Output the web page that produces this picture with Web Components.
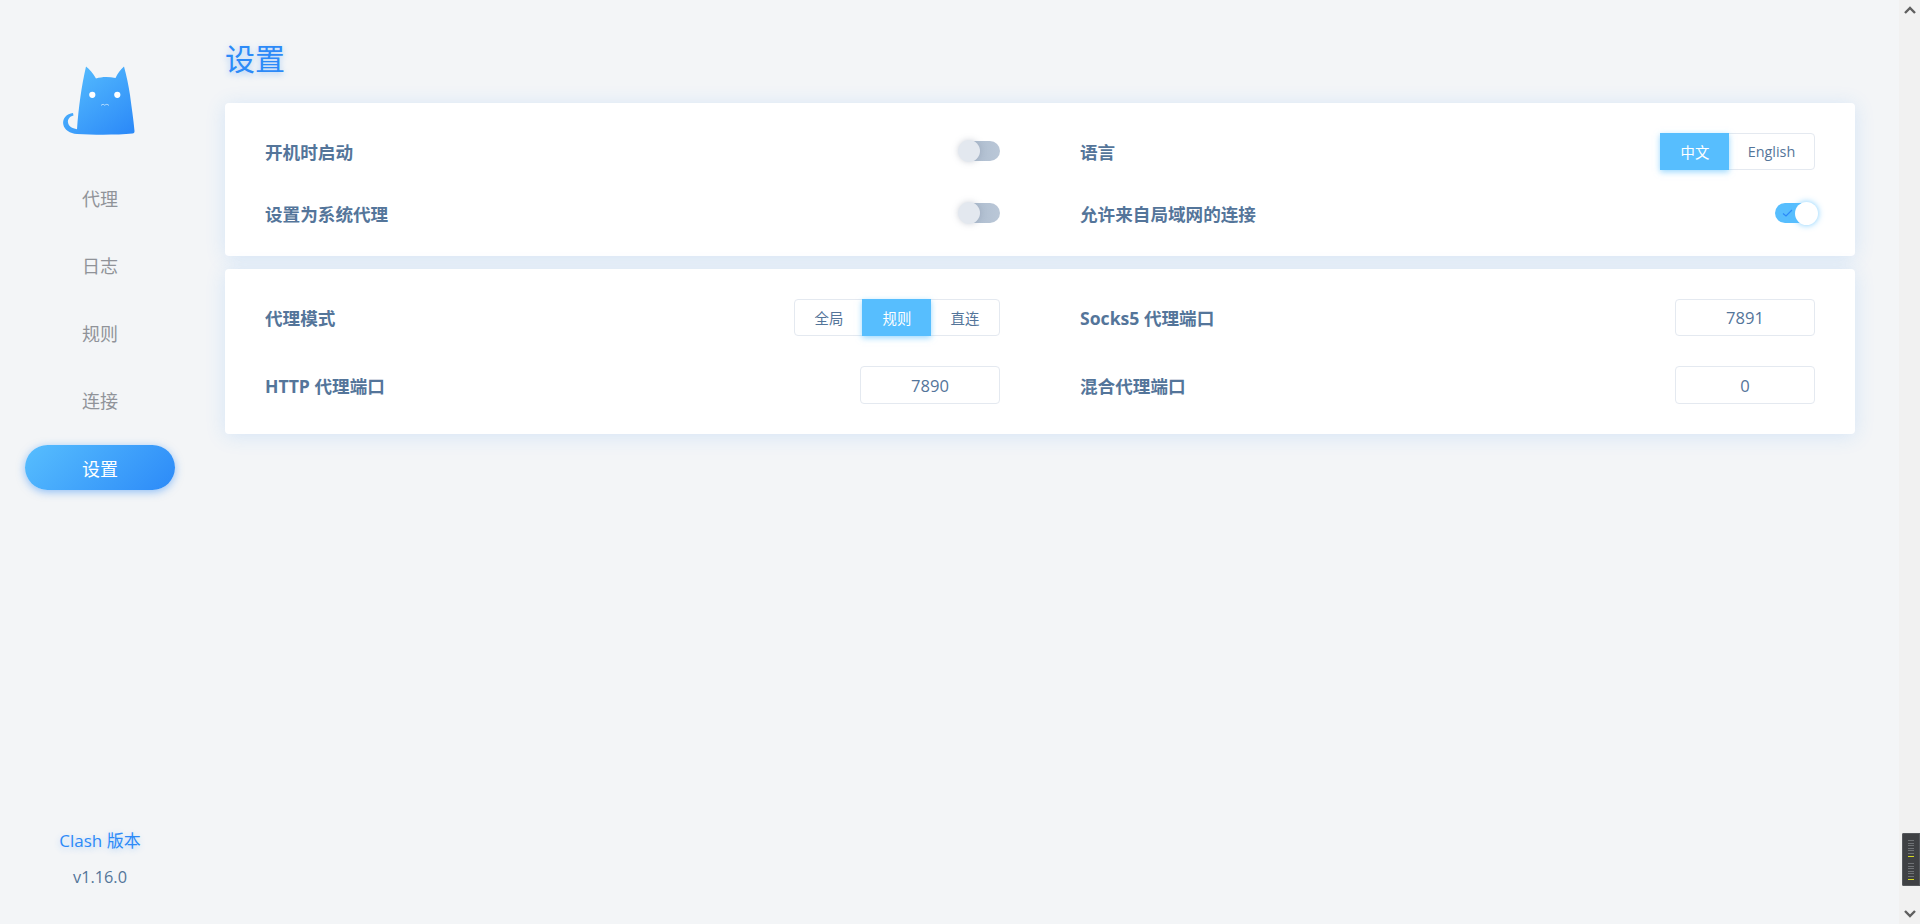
<!DOCTYPE html>
<html lang="zh">
<head>
<meta charset="utf-8">
<title>Clash</title>
<style>
  html, body {
    margin: 0;
    height: 100%;
    overflow: hidden;
    background: #f3f5f7;
    font-family: "Open Sans", "Noto Sans CJK SC", sans-serif;
  }
</style>
</head>
<body>
<clash-app>
  <clash-sidebar slot="sidebar">
    <nav-item>代理</nav-item>
    <nav-item>日志</nav-item>
    <nav-item>规则</nav-item>
    <nav-item>连接</nav-item>
    <nav-item active>设置</nav-item>
  </clash-sidebar>
  <page-title>设置</page-title>
  <setting-card tight>
    <setting-row label="开机时启动"><toggle-switch></toggle-switch></setting-row>
    <setting-row label="语言"><seg-group options="中文,English" selected="0" wide></seg-group></setting-row>
    <setting-row label="设置为系统代理"><toggle-switch></toggle-switch></setting-row>
    <setting-row label="允许来自局域网的连接"><toggle-switch checked></toggle-switch></setting-row>
  </setting-card>
  <setting-card>
    <setting-row label="代理模式"><seg-group options="全局,规则,直连" selected="1"></seg-group></setting-row>
    <setting-row label="Socks5 代理端口"><port-field>7891</port-field></setting-row>
    <setting-row label="HTTP 代理端口"><port-field>7890</port-field></setting-row>
    <setting-row label="混合代理端口"><port-field>0</port-field></setting-row>
  </setting-card>
</clash-app>

<script>
class ClashApp extends HTMLElement {
  constructor() {
    super();
    this.shadowDOM = this.attachShadow({ mode: "open" });
  }

  connectedCallback() {
    this.shadowDOM.innerHTML = `
      <style>
        :host {
          display: flex;
          height: 924px;
        }
        main {
          flex: 1;
          min-width: 0;
          padding: 37px 44px 0 25px;
        }
      </style>
      <slot name="sidebar"></slot>
      <main><slot></slot></main>
      <fake-scrollbar></fake-scrollbar>
    `;
  }
}

class ClashSidebar extends HTMLElement {
  constructor() {
    super();
    this.shadowDOM = this.attachShadow({ mode: "open" });
  }

  connectedCallback() {
    this.shadowDOM.innerHTML = `
      <style>
        :host {
          display: flex;
          flex-direction: column;
          width: 200px;
          flex: none;
          box-sizing: border-box;
          padding: 60px 25px 35px;
        }
        svg {
          display: block;
          width: 80px;
          height: 80px;
          margin: 0 auto 35px;
        }
        nav {
          display: flex;
          flex-direction: column;
          gap: 22.5px;
        }
        footer {
          margin-top: auto;
          text-align: center;
          font-size: 17px;
          line-height: 24px;
          color: #54759a;
        }
        .name {
          color: #2c8af8;
          margin-bottom: 12px;
          text-shadow: 0 2px 6px rgba(44, 138, 248, 0.3);
        }
        .version {
          font-size: 16.3px;
        }
      </style>
      <svg viewBox="60 60 80 80" aria-hidden="true">
        <defs>
          <linearGradient id="cat" x1="0.1" y1="0" x2="0.9" y2="1">
            <stop offset="0" stop-color="#57befe"/>
            <stop offset="1" stop-color="#2c8af8"/>
          </linearGradient>
        </defs>
        <path fill="url(#cat)" d="M86 66.500C89.500 69 93 73.500 96 78.500C102 76.500 109 76.500 115.500 78C117.500 73.500 120.500 69.500 124 66.500C126.500 76 128.500 85 130 95C131.500 107 133.500 119 134.500 131C134.600 132.500 134 133.300 132.500 133.500C118 135 95 135 77 134C70 133.500 64.200 130 63.200 124C62.500 118.500 66.500 113.500 73 113L73.500 115.500C69.500 116.200 67.500 119.500 68 122.500C68.500 126 72 128.500 77 129.200C78.500 108 81.500 86 86 66.500Z"/>
        <circle cx="92.300" cy="94.800" r="3.100" fill="#fff"/>
        <circle cx="117.300" cy="94.800" r="3.100" fill="#fff"/>
        <path fill="none" stroke="#fff" stroke-opacity=".75" stroke-width=".8" d="M101 105.500C102.500 104 103.500 104 104.800 105.300C106 104 107.500 104 109 105.500"/>
      </svg>
      <nav><slot></slot></nav>
      <footer>
        <div class="name">Clash 版本</div>
        <div class="version">v1.16.0</div>
      </footer>
    `;
  }
}

class NavItem extends HTMLElement {
  constructor() {
    super();
    this.shadowDOM = this.attachShadow({ mode: "open" });
  }

  connectedCallback() {
    this.shadowDOM.innerHTML = `
      <style>
        :host {
          display: flex;
          align-items: center;
          justify-content: center;
          height: 45px;
          border-radius: 23px;
          font-size: 18px;
          color: #909399;
        }
        :host([active]) {
          color: #fff;
          background: linear-gradient(135deg, #57befe, #2c8af8);
          box-shadow: 0 2px 8px rgba(44, 138, 248, 0.5);
        }
      </style>
      <slot></slot>
    `;
  }
}

class PageTitle extends HTMLElement {
  constructor() {
    super();
    this.shadowDOM = this.attachShadow({ mode: "open" });
  }

  connectedCallback() {
    this.shadowDOM.innerHTML = `
      <style>
        :host {
          display: block;
          font-size: 30px;
          line-height: 44px;
          margin-bottom: 22px;
          color: #2c8af8;
          text-shadow: 0 2px 6px rgba(44, 138, 248, 0.4);
        }
      </style>
      <slot></slot>
    `;
  }
}

class SettingCard extends HTMLElement {
  constructor() {
    super();
    this.shadowDOM = this.attachShadow({ mode: "open" });
  }

  connectedCallback() {
    this.shadowDOM.innerHTML = `
      <style>
        :host {
          display: grid;
          grid-template-columns: 1fr 1fr;
          column-gap: 80px;
          row-gap: 30px;
          padding: 30px 40px;
          margin-bottom: 13px;
          background: #fff;
          border-radius: 4px;
          box-shadow: 0 2px 20px rgba(44, 138, 248, 0.15);
        }
        :host([tight]) {
          row-gap: 25px;
          padding-bottom: 24px;
        }
      </style>
      <slot></slot>
    `;
  }
}

class SettingRow extends HTMLElement {
  constructor() {
    super();
    this.shadowDOM = this.attachShadow({ mode: "open" });
  }

  connectedCallback() {
    this.shadowDOM.innerHTML = `
      <style>
        :host {
          display: flex;
          align-items: center;
          justify-content: space-between;
          min-height: 37px;
        }
        span {
          font-size: 17.6px;
          font-weight: 700;
          color: #54759a;
        }
      </style>
      <span>${this.getAttribute("label")}</span>
      <slot></slot>
    `;
  }
}

class ToggleSwitch extends HTMLElement {
  constructor() {
    super();
    this.shadowDOM = this.attachShadow({ mode: "open" });
  }

  connectedCallback() {
    this.shadowDOM.innerHTML = `
      <style>
        :host {
          display: block;
          position: relative;
          width: 40px;
          height: 20px;
          margin-top: -1px;
          border-radius: 10px;
          background: linear-gradient(90deg, #a9b9cc, #bac7d7);
        }
        .knob {
          position: absolute;
          top: -1px;
          left: -2px;
          width: 22px;
          height: 22px;
          border-radius: 50%;
          background: #e3e8ef;
          box-shadow: 0 0 6px rgba(120, 130, 150, 0.35);
        }
        svg {
          display: none;
          position: absolute;
          left: 7px;
          top: 5px;
          width: 11px;
          height: 10px;
        }
        :host([checked]) {
          background: #57befe;
        }
        :host([checked]) svg {
          display: block;
        }
        :host([checked]) .knob {
          left: 20px;
          top: -1px;
          width: 23px;
          height: 23px;
          background: #fff;
          box-shadow: 0 0 6px rgba(87, 190, 254, 0.8);
        }
      </style>
      <svg viewBox="0 0 11 10"><path fill="none" stroke="#2c8af8" stroke-width="1.200" d="M1 5.500L4 8L10 2"/></svg>
      <div class="knob"></div>
    `;
  }
}

class SegGroup extends HTMLElement {
  constructor() {
    super();
    this.shadowDOM = this.attachShadow({ mode: "open" });
  }

  connectedCallback() {
    const selected = Number(this.getAttribute("selected"));
    const buttons = this.getAttribute("options").split(",").map((text, i) =>
      `<div class="seg ${i === selected ? "on" : ""}">${text}</div>`).join("");
    this.shadowDOM.innerHTML = `
      <style>
        :host {
          display: flex;
          align-self: flex-start;
          box-sizing: border-box;
          height: 37px;
          border: 1px solid #e4e9f0;
          border-radius: 4px;
          font-size: 14.4px;
          color: #54759a;
        }
        .seg {
          display: flex;
          align-items: center;
          justify-content: center;
          width: 68px;
        }
        :host([wide]) .seg:last-child {
          width: 85px;
        }
        .on {
          margin: -1px 0 -1px -1px;
          padding: 1px 0 1px 1px;
          color: #fff;
          background: #57befe;
          box-shadow: 0 2px 6px rgba(87, 190, 254, 0.6);
        }
        .on:first-child {
          border-radius: 4px 0 0 4px;
        }
      </style>
      ${buttons}
    `;
  }
}

class PortField extends HTMLElement {
  constructor() {
    super();
    this.shadowDOM = this.attachShadow({ mode: "open" });
  }

  connectedCallback() {
    this.shadowDOM.innerHTML = `
      <style>
        :host {
          display: flex;
          align-items: center;
          justify-content: center;
          box-sizing: border-box;
          width: 140px;
          height: 37.4px;
          border: 1px solid #e4e9f0;
          border-radius: 4px;
          font-size: 16.600px;
          color: #54759a;
        }
      </style>
      <slot></slot>
    `;
  }
}

class FakeScrollbar extends HTMLElement {
  constructor() {
    super();
    this.shadowDOM = this.attachShadow({ mode: "open" });
  }

  connectedCallback() {
    const ticks = (top) => Array.from({ length: 7 }, (_, i) =>
      `<i style="top:${top + i * 2.6}px"></i>`).join("") + `<i class="mark" style="top:${top + 16}px"></i>`;
    this.shadowDOM.innerHTML = `
      <style>
        :host {
          display: flex;
          flex-direction: column;
          justify-content: space-between;
          align-items: center;
          position: relative;
          flex: none;
          width: 21px;
          height: 924px;
          padding: 6px 0;
          box-sizing: border-box;
          background: #f1f1f1;
        }
        svg {
          width: 12px;
          height: 8px;
        }
        .thumb {
          position: absolute;
          left: 3px;
          right: 0;
          top: 833px;
          height: 53px;
          background: #3f4144;
          border-radius: 2px 0 0 2px;
          box-shadow: inset 0 0 0 1px #55585c;
        }
        i {
          position: absolute;
          left: 6px;
          width: 6px;
          height: 1px;
          background: #6f7275;
        }
        i.mark {
          background: #d6d91f;
        }
      </style>
      <svg viewBox="0 0 12 8"><path fill="none" stroke="#5f5f5f" stroke-width="2.400" d="M1 7L6 2L11 7"/></svg>
      <div class="thumb">${ticks(7)}${ticks(30)}</div>
      <svg viewBox="0 0 12 8"><path fill="none" stroke="#5f5f5f" stroke-width="2.400" d="M1 1L6 6L11 1"/></svg>
    `;
  }
}

customElements.define("clash-app", ClashApp);
customElements.define("clash-sidebar", ClashSidebar);
customElements.define("nav-item", NavItem);
customElements.define("page-title", PageTitle);
customElements.define("setting-card", SettingCard);
customElements.define("setting-row", SettingRow);
customElements.define("toggle-switch", ToggleSwitch);
customElements.define("seg-group", SegGroup);
customElements.define("port-field", PortField);
customElements.define("fake-scrollbar", FakeScrollbar);
</script>
</body>
</html>
